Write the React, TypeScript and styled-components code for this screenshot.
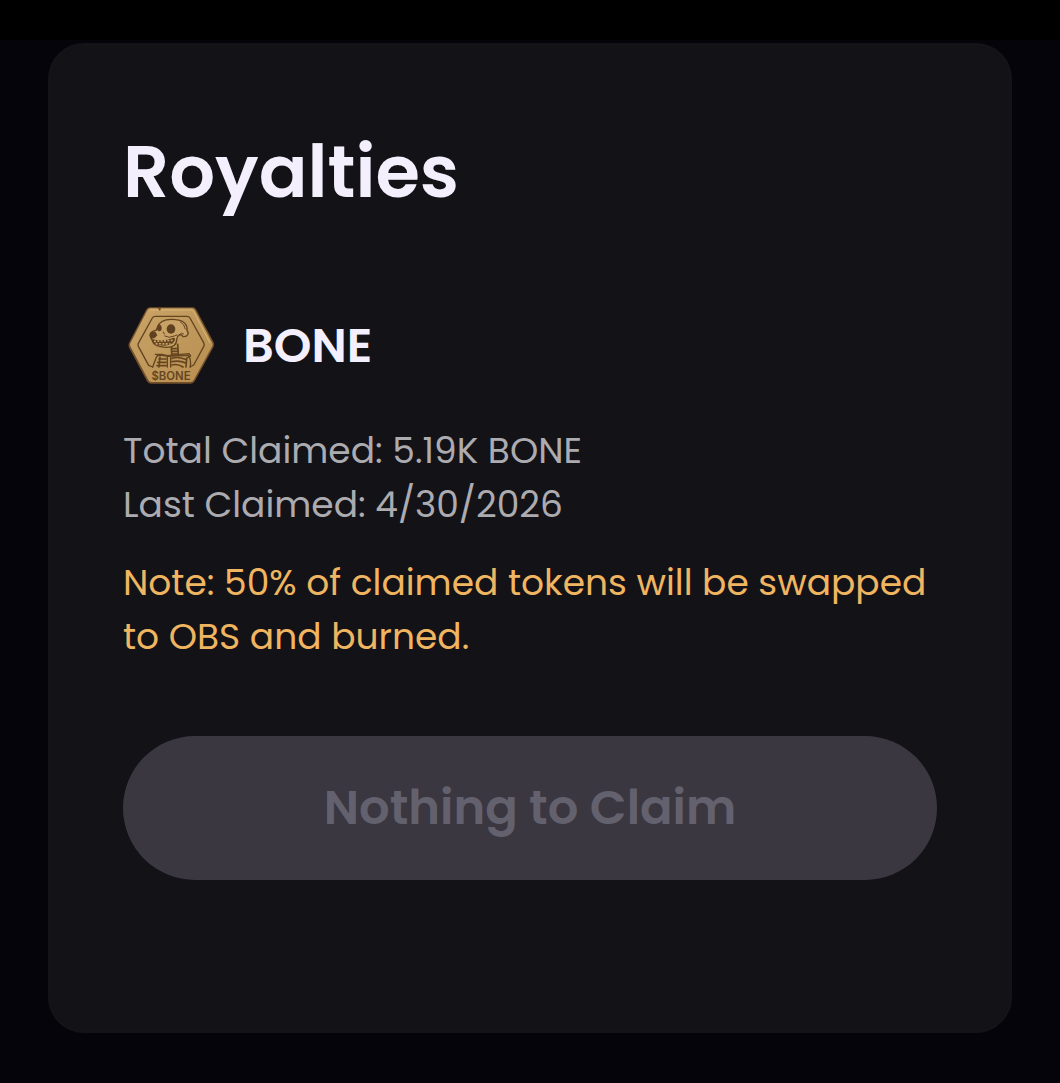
import React from "react";
import styled, { createGlobalStyle } from "styled-components";

const GlobalStyle = createGlobalStyle`
  *, *::before, *::after { box-sizing: border-box; }
  body {
    margin: 0;
    background: #06040b;
    color: #f3effd;
    font-family: Poppins, Inter, "Open Sans", sans-serif;
  }
  h1, h2, p { margin: 0; }
`;

const TopBar = styled.header`
  height: 40px;
  background: #000;
`;

const Page = styled.main`
  padding: 3px 48px 50px;
`;

const Card = styled.section`
  display: flex;
  flex-direction: column;
  padding: 72px 72px 150px;
  border: 3px solid #141318;
  border-radius: 36px;
  background: #131217;
`;

const Title = styled.h1`
  font-size: 72px;
  font-weight: 600;
  line-height: 108px;
`;

const TokenRow = styled.div`
  display: flex;
  align-items: center;
  gap: 24px;
  margin-top: 72px;
`;

const TokenIcon = styled.svg`
  flex: none;
  width: 96px;
  height: 96px;
`;

const TokenName = styled.h2`
  font-size: 48px;
  font-weight: 600;
  line-height: 72px;
`;

const Details = styled.div`
  margin-top: 30px;
`;

const Text = styled.p<{ $tone?: "muted" | "warning" }>`
  font-size: 36px;
  font-weight: 400;
  line-height: 54px;
  color: ${({ $tone }) => ($tone === "warning" ? "#f0b560" : "#acabb0")};
`;

const Note = styled(Text)`
  margin-top: 24px;
`;

const ClaimButton = styled.button`
  width: 100%;
  height: 144px;
  margin-top: 72px;
  border: 0;
  border-radius: 72px;
  background: #3a3741;
  color: #64616e;
  font: inherit;
  font-size: 48px;
  font-weight: 600;
  line-height: 72px;
`;

function BoneIcon() {
  return (
    <TokenIcon viewBox="15 9 288 288" role="img" aria-label="BONE token">
      <defs>
        <linearGradient id="coin" x1="0" y1="0" x2="1" y2="1">
          <stop offset="0" stopColor="#cba467" />
          <stop offset="0.5" stopColor="#bf985c" />
          <stop offset="1" stopColor="#b98f50" />
        </linearGradient>
      </defs>
      <path d="M95 37H224Q231 37 235 44L287 142Q290 149 287 155L230 259Q226 266 218 266H99Q91 266 87 259L33 158Q29 150 33 143L84 45Q88 37 95 37Z" fill="#73502a" />
      <path d="M97 40H222Q228 40 231 46L283 144Q285 149 283 153L227 255Q223 261 217 261H101Q95 261 91 255L37 154Q35 149 37 145L88 46Q91 40 97 40Z" fill="url(#coin)" />
      <path d="M97 45H219Q225 45 228 51L276 144" fill="none" stroke="#dab678" strokeWidth="3" />
      <path d="M119 40L126 48L129 40Z" fill="#65451f" />
      <g fill="none" stroke="#65451f" strokeLinecap="round" strokeLinejoin="round">
        <path d="M104 216L92 211L61 154Q59 149 61 145L103 69Q106 64 112 64H207Q213 64 216 69L257 143Q260 149 257 155L227 210L216 216" strokeWidth="4" />
        <path d="M160 152L161 178M179 148L181 178M163 161H180M162 169H181M163 177H180" strokeWidth="5" />
        <path d="M118 98C124 77 145 71 173 74C200 76 209 91 207 107C214 113 210 126 196 125L189 119C181 118 178 125 176 133C177 149 165 158 143 157C122 156 106 150 103 137L99 129C92 115 103 107 114 106Z" fill="#c8a267" strokeWidth="4" />
        <path d="M136 111L139 117M140 123Q153 131 169 123L177 120M184 119Q190 110 197 117M187 80Q200 88 202 102" strokeWidth="3" />
        <path d="M104 216L115 187Q118 180 127 180L150 184L210 181Q220 190 217 216M112 178L132 178L148 182L213 176L218 183L207 189M148 185V216M158 185V216" strokeWidth="4" />
        <path d="M123 192H144M119 202H144M117 212H144M162 190Q181 184 202 193M162 200Q183 195 204 204M162 210Q178 205 195 216M126 186L123 216M206 190L204 216" strokeWidth="5" />
      </g>
      <path d="M102 132Q134 141 167 128Q174 129 169 139Q162 152 139 152Q116 151 104 143Z" fill="#65451f" />
      <path d="M108 139L165 136M113 146L158 147" stroke="#c8a267" strokeWidth="5" strokeDasharray="6 4" fill="none" />
      <path d="M94 120Q99 107 112 110L118 121Q108 135 97 129Z" fill="#60411f" />
      <ellipse cx="159" cy="102" rx="13" ry="14" fill="#60411f" />
      <ellipse cx="124" cy="99" rx="7" ry="10" fill="#60411f" />
      <text x="159" y="254" textAnchor="middle" fontFamily="Inter, sans-serif" fontSize="34" fontWeight="600" fill="#65451f">$BONE</text>
    </TokenIcon>
  );
}

export default function App() {
  return (
    <>
      <GlobalStyle />
      <TopBar />
      <Page>
        <Card>
          <Title>Royalties</Title>
          <TokenRow>
            <BoneIcon />
            <TokenName>BONE</TokenName>
          </TokenRow>
          <Details>
            <Text>Total Claimed: 5.19K BONE</Text>
            <Text>Last Claimed: 4/30/2026</Text>
            <Note $tone="warning">
              Note: 50% of claimed tokens will be swapped to OBS and burned.
            </Note>
          </Details>
          <ClaimButton type="button" disabled>
            Nothing to Claim
          </ClaimButton>
        </Card>
      </Page>
    </>
  );
}
